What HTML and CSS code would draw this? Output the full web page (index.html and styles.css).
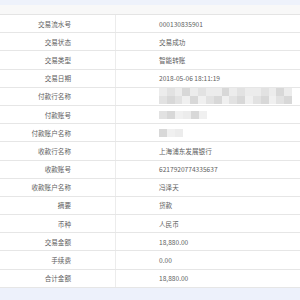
FILE: index.html
```html
<!DOCTYPE html>
<html>
<head>
<meta charset="utf-8">
<link rel="stylesheet" href="styles.css">
</head>
<body>
<div class="page">
  <div class="topband"></div>
  <div class="head"></div>
  <div class="table">
    <div class="row"><div class="lbl">交易流水号</div><div class="val">000130835901</div></div>
    <div class="row"><div class="lbl">交易状态</div><div class="val">交易成功</div></div>
    <div class="row"><div class="lbl">交易类型</div><div class="val">智能转账</div></div>
    <div class="row"><div class="lbl">交易日期</div><div class="val">2018-05-06 18:11:19</div></div>
    <div class="row"><div class="lbl">付款行名称</div><div class="val">
      <div class="mosaic wide">
        <div class="mrow"><span class="a"></span><span class="b"></span><span class="a"></span><span class="c"></span><span class="a"></span><span class="b"></span><span class="a"></span><span class="a"></span><span class="c"></span><span class="a"></span><span class="b"></span><span class="a"></span><span class="a"></span><span class="b"></span><span class="a"></span><span class="c"></span><span class="a"></span></div>
        <div class="mrow"><span class="b"></span><span class="c"></span><span class="b"></span><span class="d"></span><span class="c"></span><span class="d"></span><span class="b"></span><span class="c"></span><span class="d"></span><span class="b"></span><span class="c"></span><span class="d"></span><span class="b"></span><span class="c"></span><span class="d"></span><span class="b"></span><span class="c"></span></div>
      </div>
    </div></div>
    <div class="row"><div class="lbl">付款账号</div><div class="val">
      <div class="mosaic"><div class="mrow"><span class="b"></span><span class="c"></span><span class="d"></span><span class="a"></span><span class="c"></span><span class="d"></span></div></div>
    </div></div>
    <div class="row"><div class="lbl">付款账户名称</div><div class="val">
      <div class="mosaic"><div class="mrow"><span class="c"></span><span class="d"></span><span class="a"></span></div></div>
    </div></div>
    <div class="row"><div class="lbl">收款行名称</div><div class="val">上海浦东发展银行</div></div>
    <div class="row"><div class="lbl">收款账号</div><div class="val">6217920774335637</div></div>
    <div class="row"><div class="lbl">收款账户名称</div><div class="val">冯泽天</div></div>
    <div class="row"><div class="lbl">摘要</div><div class="val">货款</div></div>
    <div class="row"><div class="lbl">币种</div><div class="val">人民币</div></div>
    <div class="row"><div class="lbl">交易金额</div><div class="val">18,880.00</div></div>
    <div class="row"><div class="lbl">手续费</div><div class="val">0.00</div></div>
    <div class="row"><div class="lbl">合计金额</div><div class="val">18,880.00</div></div>
  </div>
  <div class="foot"></div>
</div>
</body>
</html>
```
FILE: styles.css
```css
html, body {
  margin: 0;
  padding: 0;
  background: #ffffff;
}
.page {
  width: 300px;
  height: 300px;
  display: flex;
  flex-direction: column;
  font-family: "Noto Sans CJK SC", "Liberation Sans", sans-serif;
  font-size: 6.6px;
  color: #5e5e5e;
  overflow: hidden;
}
.topband {
  height: 5px;
  background: #eef2fb;
}
.head {
  height: 9px;
  background: #f8f8f8;
  border-bottom: 1px solid #e4e4e4;
}
.table {
  display: flex;
  flex-direction: column;
}
.row {
  height: 17.2px;
  display: grid;
  grid-template-columns: 116px 1fr;
  border-bottom: 1px solid #e6e6e6;
}
.lbl {
  display: flex;
  align-items: center;
  justify-content: flex-end;
  padding-right: 44px;
  border-right: 1px solid #ececec;
}
.val {
  display: flex;
  align-items: center;
  padding-left: 43px;
}
.foot {
  flex: 1;
  background: #edf1fb;
}
.mosaic {
  display: flex;
  flex-direction: column;
}
.mosaic.wide {
  width: 133px;
}
.mrow {
  display: flex;
  height: 8px;
}
.mrow span {
  width: 8px;
  flex: 0 0 auto;
}
.mosaic.wide .mrow span {
  flex: 1;
}
.a { background: #ececec; }
.b { background: #e2e2e2; }
.c { background: #d8d8d8; }
.d { background: #f0f0f0; }
```
